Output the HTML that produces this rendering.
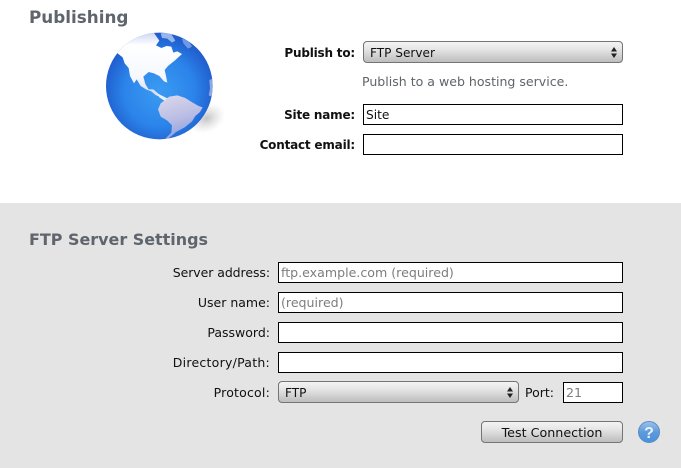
<!DOCTYPE html>
<html><head><meta charset="utf-8">
<style>
html,body{margin:0;padding:0;background:#fff}
body{width:681px;height:468px;overflow:hidden;position:relative;font-family:"DejaVu Sans","Liberation Sans",sans-serif;font-size:12.5px;color:#111}
.gray{position:absolute;left:0;top:203px;width:681px;height:265px;background:#e4e4e4}
.h{position:absolute;left:29px;font-weight:bold;color:#5f656c;white-space:nowrap}
.l{position:absolute;text-align:right;white-space:nowrap;line-height:16px;right:0}
.lb{font-weight:bold;font-size:12px;letter-spacing:-.2px}
.i{position:absolute;box-sizing:border-box;border:1px solid #000;background:#fff;height:21px;line-height:20px;padding-left:2px;white-space:nowrap;overflow:hidden;font-size:12.6px}
.ph{color:#7d7d7d}
.s{position:absolute;box-sizing:border-box;border:1px solid #757575;border-radius:4px;height:22px;line-height:22px;padding-left:6px;background:linear-gradient(#f4f4f4,#e6e6e6 35%,#bdbdbd);font-size:12.1px;white-space:nowrap}
.ar{position:absolute;right:5px;top:5px}
</style></head>
<body>
<div class="gray"></div>
<div class="h" style="top:7px;font-size:16.8px">Publishing</div>
<div class="h" style="top:230px;font-size:15.95px">FTP Server Settings</div>

<svg style="position:absolute;left:90px;top:20px" width="150" height="130" viewBox="0 0 450 390">
<defs>
<radialGradient id="g" cx=".5" cy=".55" r=".6">
<stop offset="0" stop-color="#3a9bf2"/><stop offset=".55" stop-color="#2b84ea"/><stop offset=".85" stop-color="#2160d0"/><stop offset="1" stop-color="#2f52bd"/>
</radialGradient>
<radialGradient id="sh"><stop offset="0" stop-color="#aaa" stop-opacity=".7"/><stop offset="1" stop-color="#ccc" stop-opacity="0"/></radialGradient>
<linearGradient id="land" x1="0" y1="0" x2="0" y2="1"><stop offset="0" stop-color="#c9d3f5"/><stop offset=".2" stop-color="#fff"/><stop offset=".7" stop-color="#f6f8fe"/><stop offset="1" stop-color="#cfd8f4"/></linearGradient>
<linearGradient id="sa" x1="0" y1="0" x2=".3" y2="1"><stop offset="0" stop-color="#dcdaec"/><stop offset=".6" stop-color="#b9bce4"/><stop offset="1" stop-color="#8ea2e0"/></linearGradient>
<clipPath id="c"><circle cx="208" cy="198" r="160"/></clipPath>
</defs>
<ellipse cx="350" cy="295" rx="58" ry="42" fill="url(#sh)" transform="rotate(-25 350 295)"/>
<circle cx="208" cy="198" r="160" fill="url(#g)"/>
<g clip-path="url(#c)">
<path fill="url(#land)" d="M80 98L98 112 104 130 116 144 120 168 132 190 140 178 152 198 168 208 184 214 198 226 210 230 204 220 190 208 176 208 166 192 160 170 176 156 192 160 208 168 222 184 232 188 228 168 224 150 234 138 254 122 276 102 262 94 250 98 244 80 230 78 214 84 198 76 208 62 190 36 160 36 110 50 84 76Z"/>
<path fill="#a8c6f2" opacity=".85" d="M212 40L240 36 256 62 246 68 232 56 216 54Z"/>
<path fill="#eaf0fc" d="M198 218L214 226 230 234 242 234 226 244 208 232Z"/>
<path fill="url(#sa)" d="M238 230L262 226 286 234 308 248 326 258 338 262 330 276 316 288 306 304 284 322 258 336 246 346 232 358 222 360 244 338 246 316 232 302 212 290 204 268 212 250Z"/>
<path fill="#a9b9ea" opacity=".8" d="M358 180L368 176 372 200 366 230 356 226 360 206Z"/>
<path fill="#8fb2ee" opacity=".7" d="M276 56L296 62 306 80 294 86 280 70Z"/>
</g>
</svg>

<div style="position:absolute;left:0;top:45px;width:355px;height:16px"><div class="l lb">Publish to:</div></div>
<div class="s" style="left:363px;top:41px;width:260px">FTP Server<svg class="ar" width="6" height="11" viewBox="0 0 6 11"><path d="M3 0L6 4.5H0ZM0 6.5H6L3 11Z" fill="#222"/></svg></div>
<div style="position:absolute;left:362px;top:74px;color:#5f6468;white-space:nowrap;line-height:16px;font-size:12.55px">Publish to a web hosting service.</div>
<div style="position:absolute;left:0;top:107px;width:355px;height:16px"><div class="l lb">Site name:</div></div>
<div class="i" style="left:363px;top:104px;width:260px;font-size:12.2px">Site</div>
<div style="position:absolute;left:0;top:137px;width:355px;height:16px"><div class="l lb">Contact email:</div></div>
<div class="i" style="left:363px;top:134px;width:260px"></div>

<div style="position:absolute;left:0;top:265px;width:270px;height:16px"><div class="l" style="letter-spacing:-.07px">Server address:</div></div>
<div class="i ph" style="left:278px;top:262px;width:345px">ftp.example.com (required)</div>
<div style="position:absolute;left:0;top:295px;width:270px;height:16px"><div class="l">User name:</div></div>
<div class="i ph" style="left:278px;top:292px;width:345px">(required)</div>
<div style="position:absolute;left:0;top:325px;width:270px;height:16px"><div class="l">Password:</div></div>
<div class="i" style="left:278px;top:322px;width:345px"></div>
<div style="position:absolute;left:0;top:355px;width:270px;height:16px"><div class="l" style="letter-spacing:.25px">Directory/Path:</div></div>
<div class="i" style="left:278px;top:352px;width:345px"></div>
<div style="position:absolute;left:0;top:385px;width:270px;height:16px"><div class="l" style="letter-spacing:.2px">Protocol:</div></div>
<div class="s" style="left:278px;top:381px;width:241px">FTP<svg class="ar" width="6" height="11" viewBox="0 0 6 11"><path d="M3 0L6 4.5H0ZM0 6.5H6L3 11Z" fill="#222"/></svg></div>
<div style="position:absolute;left:525px;top:385px;line-height:16px">Port:</div>
<div class="i ph" style="left:563px;top:382px;width:60px">21</div>

<div class="s" style="left:481px;top:421px;width:142px;text-align:center;padding:0;font-size:12.7px">Test Connection</div>
<svg style="position:absolute;left:638px;top:421px" width="22" height="22" viewBox="0 0 22 22">
<defs><linearGradient id="q" x1="0" y1="0" x2="0" y2="1"><stop offset="0" stop-color="#9cc3ea"/><stop offset=".5" stop-color="#5d9bdc"/><stop offset="1" stop-color="#4a90de"/></linearGradient></defs>
<circle cx="11" cy="11" r="10.5" fill="url(#q)" stroke="#5a8cc4"/>
<text x="11" y="17" text-anchor="middle" font-family="Liberation Sans" font-weight="bold" font-size="16" fill="#e8f1fb">?</text>
</svg>
</body></html>
